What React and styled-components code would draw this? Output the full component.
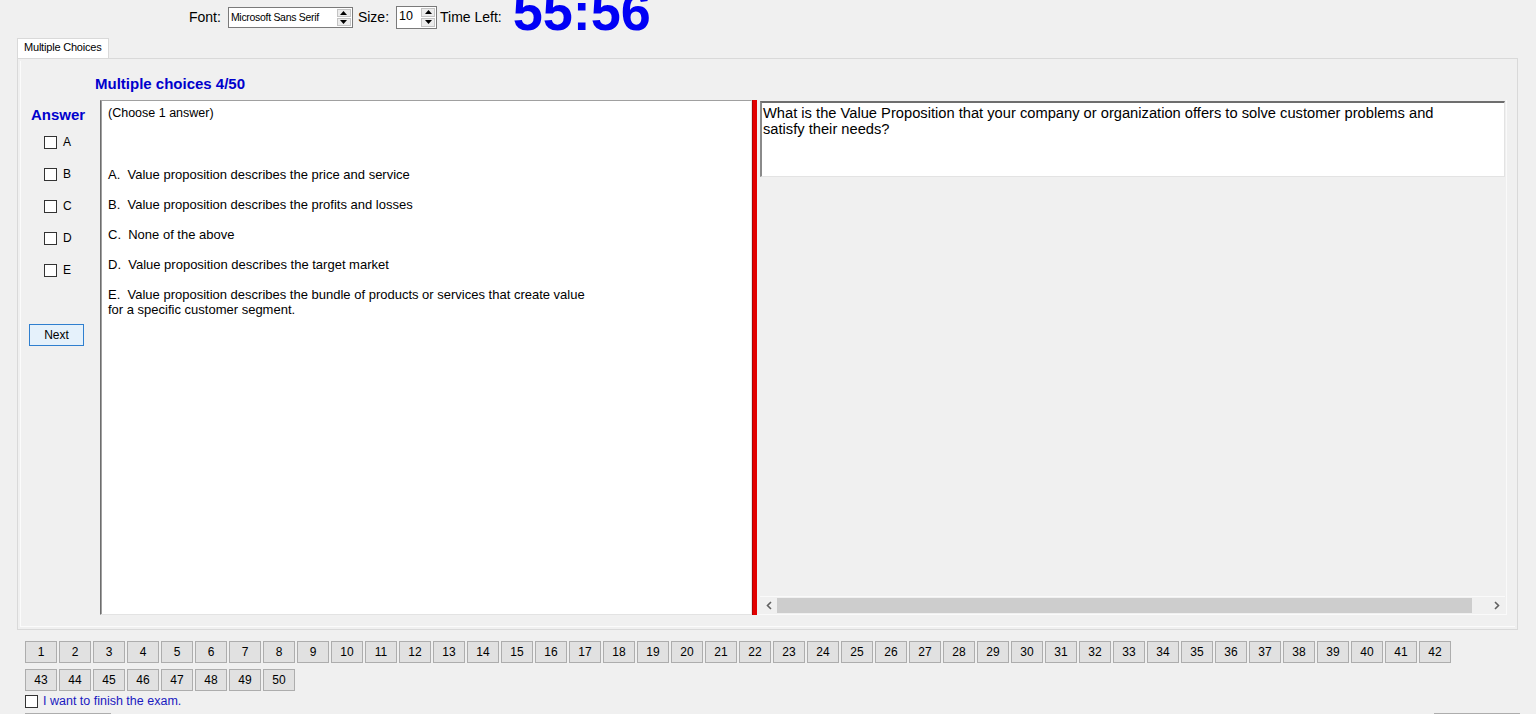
import React from 'react';
import styled, { createGlobalStyle } from 'styled-components';

const Global = createGlobalStyle`
  html, body { margin: 0; padding: 0; background: #f0f0f0; height: 100%; overflow: hidden; }
  body { font-family: "Liberation Sans", Arial, sans-serif; color: #000; }
  * { box-sizing: border-box; }
`;

const Window = styled.div`
  width: 1536px;
  height: 714px;
  overflow: hidden;
  display: flex;
  flex-direction: column;
`;

const TopBar = styled.div`
  display: flex;
  align-items: center;
  height: 34px;
  padding-left: 189px;
  flex-shrink: 0;
`;

const Label = styled.span`
  font-size: 14px;
  margin-left: ${(p) => p.$ml || 0}px;
  white-space: nowrap;
`;

const UpDown = styled.div`
  display: flex;
  align-items: stretch;
  width: ${(p) => p.$w}px;
  height: ${(p) => p.$h}px;
  margin-left: ${(p) => p.$ml || 0}px;
  background: #fff;
  border: 1px solid #7a7a7a;
`;

const UpDownText = styled.div`
  flex: 1;
  font-size: ${(p) => p.$fs}px;
  line-height: ${(p) => p.$lh}px;
  padding-left: 2px;
  white-space: nowrap;
  overflow: hidden;
  letter-spacing: ${(p) => p.$ls || 0}px;
`;

const SpinCol = styled.div`
  display: flex;
  flex-direction: column;
  width: 15px;
  padding: 1px 1px 1px 0;
  gap: 1px;
`;

const SpinBtn = styled.div`
  flex: 1;
  background: #ececec;
  border: 1px solid #c4c4c4;
  display: flex;
  align-items: center;
  justify-content: center;
`;

const Timer = styled.div`
  align-self: flex-start;
  margin-top: -16px;
  margin-left: 11px;
  font-size: 54px;
  line-height: 54px;
  font-weight: bold;
  color: #0000f5;
  white-space: nowrap;
`;

const TabStrip = styled.div`
  display: flex;
  margin-top: 4px;
  padding-left: 17px;
  flex-shrink: 0;
`;

const Tab = styled.div`
  width: 92px;
  height: 20px;
  background: #fff;
  border: 1px solid #d9d9d9;
  border-bottom: none;
  font-size: 11px;
  line-height: 17px;
  padding-left: 6px;
  white-space: nowrap;
  letter-spacing: -0.2px;
`;

const TabPage = styled.div`
  margin: 0 18px 0 17px;
  border: 1px solid #d9d9d9;
  padding: 2px;
  flex-shrink: 0;
`;

const Panel = styled.div`
  border-left: 1px solid #fbfbfb;
  border-bottom: 1px solid #fbfbfb;
  padding: 0 8px 11px 0;
  display: flex;
  flex-direction: column;
`;

const Heading = styled.div`
  margin: 14px 0 0 74px;
  font-size: 15px;
  line-height: 18px;
  font-weight: bold;
  color: #0000cd;
`;

const Body = styled.div`
  display: flex;
  margin-top: 7px;
  height: 515px;
`;

const LeftCol = styled.div`
  width: 79px;
  display: flex;
  flex-direction: column;
`;

const AnswerTitle = styled.div`
  margin: 6px 0 0 10px;
  font-size: 15px;
  line-height: 18px;
  font-weight: bold;
  color: #0000cd;
`;

const CheckRow = styled.label`
  display: flex;
  align-items: center;
  height: 32px;
  padding-left: ${(p) => p.$pl || 0}px;
  gap: ${(p) => p.$gap || 6}px;
  font-size: ${(p) => p.$fs || 12}px;
  color: ${(p) => p.$color || '#000'};
`;

const Box = styled.span`
  width: 13px;
  height: 13px;
  background: #fff;
  border: 1px solid #333;
  flex-shrink: 0;
`;

const CheckList = styled.div`
  margin-top: 2px;
  display: flex;
  flex-direction: column;
`;

const NextButton = styled.button`
  margin: 38px 0 0 8px;
  width: 55px;
  height: 22px;
  background: #e5f1fb;
  border: 1px solid #2f7fcf;
  font-family: inherit;
  font-size: 12px;
  padding: 0;
  color: #000;
`;

const SplitContainer = styled.div`
  flex: 1;
  display: flex;
`;

const LeftPane = styled.div`
  width: 652px;
  background: #fff;
  border-style: solid;
  border-width: 1px;
  border-color: #a0a0a0 #e3e3e3 #e3e3e3 #6d6d6d;
  box-shadow: inset 1px 0 0 #a0a0a0;
  padding: 5px 0 0 7px;
  font-size: 13px;
  line-height: 15px;
`;

const Choose = styled.div`
  font-size: 12.5px;
`;

const OptionList = styled.div`
  margin-top: 46px;
  display: flex;
  flex-direction: column;
  gap: 15px;
`;

const Option = styled.div`
  white-space: pre-wrap;
`;

const Splitter = styled.div`
  width: 5px;
  background: #e20000;
  box-shadow: inset 1px 0 0 #b00000;
`;

const RightPane = styled.div`
  flex: 1;
  display: flex;
  flex-direction: column;
  padding: 1px 1px 1px 3px;
  border-right: 1px solid #fafafa;
  border-bottom: 1px solid #fafafa;
`;

const QuestionBox = styled.div`
  height: 76px;
  background: #fff;
  border-style: solid;
  border-width: 2px 1px 1px 2px;
  border-color: #6e6e6e #e3e3e3 #e3e3e3 #8a8a8a;
  padding: 2px 0 0 1px;
  font-size: 14.7px;
  line-height: 16px;
`;

const Spacer = styled.div`
  flex: 1;
`;

const HScroll = styled.div`
  height: 17px;
  display: flex;
  align-items: center;
  border-top: 1px solid #fafafa;
  background: #f0f0f0;
`;

const ScrollArrow = styled.div`
  width: 17px;
  height: 16px;
  display: flex;
  align-items: center;
  justify-content: center;
`;

const ScrollTrack = styled.div`
  flex: 1;
  height: 15px;
  padding-right: 16px;
  display: flex;
`;

const Thumb = styled.div`
  flex: 1;
  background: #cdcdcd;
`;

const NumberGrid = styled.div`
  display: grid;
  grid-template-columns: repeat(42, 32px);
  grid-auto-rows: 22px;
  column-gap: 2px;
  row-gap: 6px;
  margin: 11px 0 0 25px;
  flex-shrink: 0;
`;

const NumButton = styled.button`
  background: #e1e1e1;
  border: 1px solid #adadad;
  font-family: inherit;
  font-size: 12px;
  color: #000;
  padding: 0;
`;

const FinishRow = styled(CheckRow)`
  height: 16px;
  margin-top: 2px;
  flex-shrink: 0;
`;

const BottomButtons = styled.div`
  display: flex;
  justify-content: space-between;
  padding: 0 16px 0 25px;
  margin-top: 4px;
  flex-shrink: 0;
`;

const BottomButton = styled.div`
  width: 86px;
  height: 24px;
  background: #e1e1e1;
  border: 1px solid #adadad;
`;

const Tri = ({ up }) => (
  <svg width="7" height="4" viewBox="0 0 7 4">
    <path d={up ? 'M0 4 L3.5 0 L7 4 Z' : 'M0 0 L3.5 4 L7 0 Z'} fill="#000" />
  </svg>
);

const Spin = () => (
  <SpinCol>
    <SpinBtn><Tri up /></SpinBtn>
    <SpinBtn><Tri /></SpinBtn>
  </SpinCol>
);

const Chevron = ({ right }) => (
  <svg width="6" height="9" viewBox="0 0 6 9">
    <polyline
      points={right ? '1,1 4.5,4.5 1,8' : '5,1 1.5,4.5 5,8'}
      fill="none"
      stroke="#606060"
      strokeWidth="1.6"
    />
  </svg>
);

const options = [
  'A.  Value proposition describes the price and service',
  'B.  Value proposition describes the profits and losses',
  'C.  None of the above',
  'D.  Value proposition describes the target market',
];

export default function App() {
  const nums = Array.from({ length: 50 }, (_, i) => i + 1);
  return (
    <Window>
      <Global />
      <TopBar>
        <Label>Font:</Label>
        <UpDown $w={125} $h={21} $ml={7}>
          <UpDownText $fs={10.5} $lh={18} $ls={-0.3}>Microsoft Sans Serif</UpDownText>
          <Spin />
        </UpDown>
        <Label $ml={5}>Size:</Label>
        <UpDown $w={41} $h={23} $ml={7}>
          <UpDownText $fs={12.5} $lh={19}>10</UpDownText>
          <Spin />
        </UpDown>
        <Label $ml={3}>Time Left:</Label>
        <Timer>55:56</Timer>
      </TopBar>

      <TabStrip>
        <Tab>Multiple Choices</Tab>
      </TabStrip>
      <TabPage>
        <Panel>
          <Heading>Multiple choices 4/50</Heading>
          <Body>
            <LeftCol>
              <AnswerTitle>Answer</AnswerTitle>
              <CheckList>
                {['A', 'B', 'C', 'D', 'E'].map((l) => (
                  <CheckRow key={l} $pl={23}>
                    <Box />
                    {l}
                  </CheckRow>
                ))}
              </CheckList>
              <NextButton>Next</NextButton>
            </LeftCol>
            <SplitContainer>
              <LeftPane>
                <Choose>(Choose 1 answer)</Choose>
                <OptionList>
                  {options.map((o) => (
                    <Option key={o}>{o}</Option>
                  ))}
                  <Option>
                    {'E.  Value proposition describes the bundle of products or services that create value'}
                    <br />
                    {'for a specific customer segment.'}
                  </Option>
                </OptionList>
              </LeftPane>
              <Splitter />
              <RightPane>
                <QuestionBox>
                  What is the Value Proposition that your company or organization offers to solve customer problems and
                  <br />
                  satisfy their needs?
                </QuestionBox>
                <Spacer />
                <HScroll>
                  <ScrollArrow><Chevron /></ScrollArrow>
                  <ScrollTrack><Thumb /></ScrollTrack>
                  <ScrollArrow><Chevron right /></ScrollArrow>
                </HScroll>
              </RightPane>
            </SplitContainer>
          </Body>
        </Panel>
      </TabPage>

      <NumberGrid>
        {nums.map((n) => (
          <NumButton key={n}>{n}</NumButton>
        ))}
      </NumberGrid>
      <FinishRow $pl={25} $gap={5} $fs={12.5} $color="#1a1ac0">
        <Box />
        I want to finish the exam.
      </FinishRow>
      <BottomButtons>
        <BottomButton />
        <BottomButton />
      </BottomButtons>
    </Window>
  );
}
